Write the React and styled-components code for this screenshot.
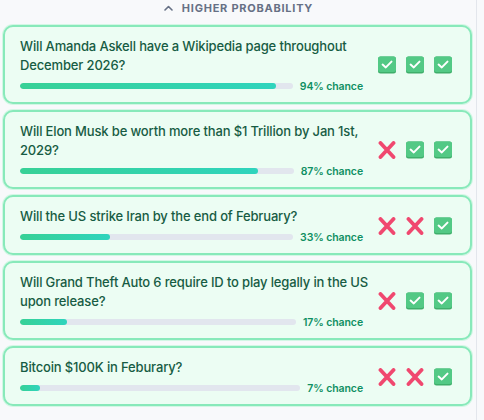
import React from "react";
import styled, { createGlobalStyle } from "styled-components";

const Global = createGlobalStyle`
  html, body { margin: 0; padding: 0; background: #f8f9fb; }
  body { font-family: Inter, "Noto Sans", sans-serif; }
`;

const Panel = styled.div`
  width: 477px;
  height: 420px;
  box-sizing: border-box;
  border-right: 1px solid #e3e6ec;
  padding: 0 4px 0 3px;
  overflow: hidden;
`;

const Header = styled.div`
  height: 15px;
  display: flex;
  align-items: center;
  justify-content: center;
  gap: 9px;
  margin-bottom: 10px;
  color: #667085;
  font-size: 11px;
  font-weight: 700;
  letter-spacing: 0.75px;
  padding-left: 2px;
`;

const List = styled.div`
  display: flex;
  flex-direction: column;
  gap: 6px;
`;

const Card = styled.div`
  display: flex;
  align-items: center;
  gap: 15px;
  background: #ecfdf3;
  border: 2px solid #88e9ba;
  box-shadow: 0 0 0 1px #d3f7e5;
  border-radius: 10px;
  padding: 10px 18px 9px 15px;
`;

const Body = styled.div`
  flex: 1;
  min-width: 0;
  display: flex;
  flex-direction: column;
  gap: 4px;
`;

const Question = styled.div`
  color: #175c43;
  font-size: 13px;
  font-weight: 500;
  line-height: 19px;
  letter-spacing: -0.15px;
`;

const Line = styled.div`
  white-space: nowrap;
`;

const Row = styled.div`
  height: 14px;
  display: flex;
  align-items: center;
  gap: 7px;
`;

const Track = styled.div`
  flex: 1;
  height: 6px;
  border-radius: 3px;
  background: #e2e6ee;
  overflow: hidden;
`;

const Fill = styled.div`
  height: 100%;
  border-radius: 3px;
  background: linear-gradient(90deg, #37d196, #2fd4bd);
`;

const Chance = styled.span`
  color: #0f8f62;
  font-size: 10.5px;
  font-weight: 600;
  letter-spacing: -0.1px;
  white-space: nowrap;
`;

const Icons = styled.div`
  display: flex;
  align-items: center;
  gap: 10px;
`;

const Check = () => (
  <svg width="18" height="18" viewBox="0 0 18 18">
    <rect x="0" y="0.5" width="18" height="17" rx="2.5" fill="#3fae6a" />
    <rect x="0" y="0.5" width="18" height="15.5" rx="2.5" fill="#53c985" />
    <path d="M4.6 8.6 L7.8 11.4 L13.5 5.6" fill="none" stroke="#fff" strokeWidth="2" strokeLinecap="round" strokeLinejoin="round" />
  </svg>
);

const Cross = () => (
  <svg width="18" height="18" viewBox="0 0 18 18">
    <path d="M2.5 2 L15.5 16 M15.5 2 L2.5 16" stroke="#f0486f" strokeWidth="3.8" strokeLinecap="round" />
  </svg>
);

const Chevron = () => (
  <svg width="9" height="6" viewBox="0 0 9 6">
    <path d="M1 5 L4.5 1.5 L8 5" fill="none" stroke="#667085" strokeWidth="1.6" strokeLinecap="round" strokeLinejoin="round" />
  </svg>
);

const items = [
  { q: ["Will Amanda Askell have a Wikipedia page throughout", "December 2026?"], p: 94, v: [1, 1, 1] },
  { q: ["Will Elon Musk be worth more than $1 Trillion by Jan 1st,", "2029?"], p: 87, v: [0, 1, 1] },
  { q: ["Will the US strike Iran by the end of February?"], p: 33, v: [0, 0, 1] },
  { q: ["Will Grand Theft Auto 6 require ID to play legally in the US", "upon release?"], p: 17, v: [0, 1, 1] },
  { q: ["Bitcoin $100K in Feburary?"], p: 7, v: [0, 0, 1] },
];

export default function App() {
  return (
    <>
      <Global />
      <Panel>
        <Header>
          <Chevron />
          <span>HIGHER PROBABILITY</span>
        </Header>
        <List>
          {items.map((it, i) => (
            <Card key={i}>
              <Body>
                <Question>
                  {it.q.map((l, k) => (
                    <Line key={k}>{l}</Line>
                  ))}
                </Question>
                <Row>
                  <Track>
                    <Fill style={{ width: `${it.p}%` }} />
                  </Track>
                  <Chance>{it.p}% chance</Chance>
                </Row>
              </Body>
              <Icons>
                {it.v.map((v, j) => (v ? <Check key={j} /> : <Cross key={j} />))}
              </Icons>
            </Card>
          ))}
        </List>
      </Panel>
    </>
  );
}
